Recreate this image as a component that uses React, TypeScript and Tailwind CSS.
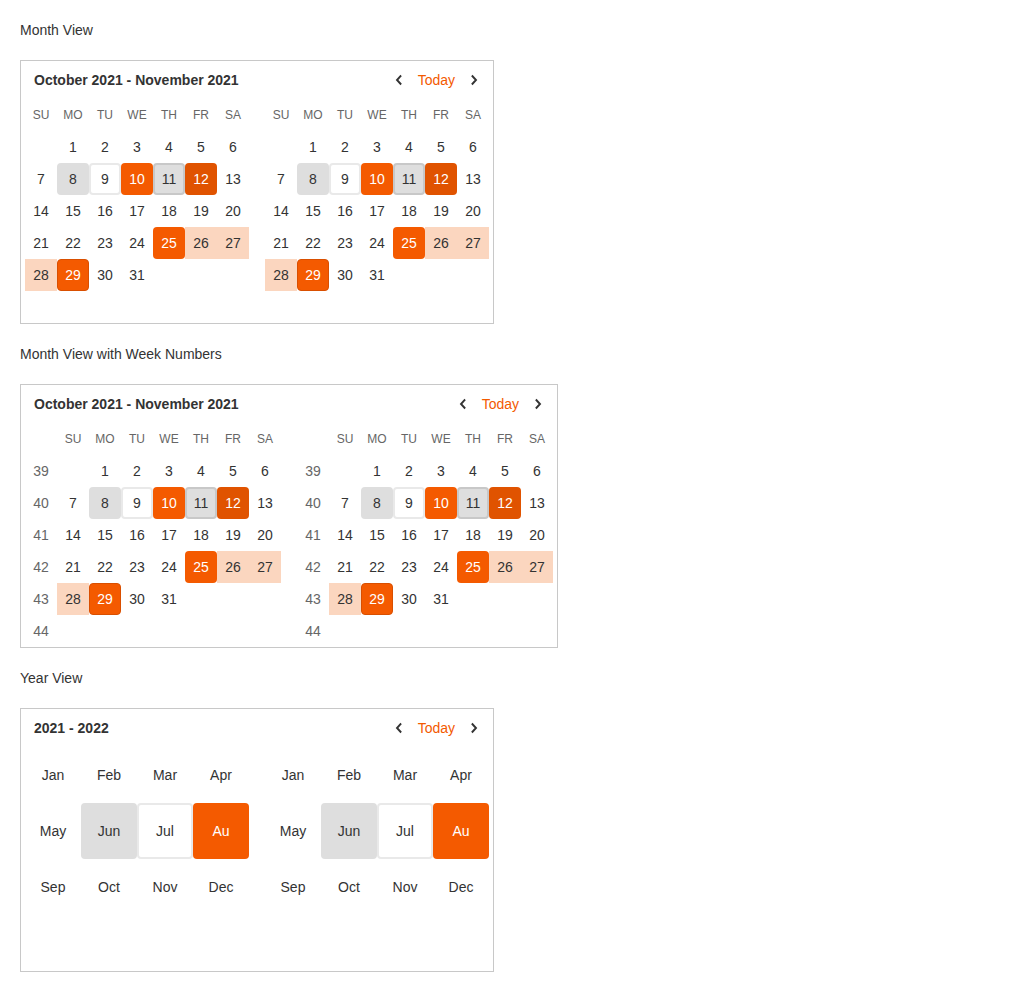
import React from 'react';

type CellState = 'none' | 'hover' | 'today' | 'selected' | 'focus' | 'active' | 'rangeStart' | 'range' | 'rangeEnd';

const DAYS = ['SU', 'MO', 'TU', 'WE', 'TH', 'FR', 'SA'];

// same grid is drawn for both months, as in the demo
const WEEKS: (number | null)[][] = [
  [null, 1, 2, 3, 4, 5, 6],
  [7, 8, 9, 10, 11, 12, 13],
  [14, 15, 16, 17, 18, 19, 20],
  [21, 22, 23, 24, 25, 26, 27],
  [28, 29, 30, 31, null, null, null],
  [null, null, null, null, null, null, null],
];

const WEEK_NUMBERS = [39, 40, 41, 42, 43, 44];

const DAY_STATE: Record<number, CellState> = {
  8: 'hover',
  9: 'today',
  10: 'selected',
  11: 'focus',
  12: 'active',
  25: 'rangeStart',
  26: 'range',
  27: 'range',
  28: 'range',
  29: 'rangeEnd',
};

const cellClass: Record<CellState, string> = {
  none: 'text-[#333]',
  hover: 'bg-[#dedede] rounded text-[#333]',
  today: 'border-2 border-[#e9e9e9] rounded text-[#333]',
  selected: 'bg-[#f45a00] rounded text-white',
  focus: 'bg-[#dedede] border-2 border-[#c8c8c8] rounded text-[#333]',
  active: 'bg-[#e05300] rounded text-white',
  rangeStart: 'bg-[#f45a00] rounded text-white',
  range: 'bg-[#fbd6bf] text-[#333]',
  rangeEnd: 'bg-[#f45a00] border border-[#d94f00] rounded text-white',
};

function Chevron({ dir }: { dir: 'left' | 'right' }) {
  return (
    <svg width="12" height="12" viewBox="0 0 12 12" fill="none">
      <path
        d={dir === 'left' ? 'M7.5 2.2L4 6l3.5 3.8' : 'M4.5 2.2L8 6 4.5 9.8'}
        stroke="#333"
        strokeWidth="1.9"
        strokeLinecap="square"
      />
    </svg>
  );
}

function Header({ title }: { title: string }) {
  return (
    <div className="flex items-center h-[38px] pl-[13px] pr-[7px]">
      <div className="flex-1 font-bold text-[14px] text-[#333]">{title}</div>
      <div className="flex items-center">
        <button className="w-6 h-6 flex items-center justify-center">
          <Chevron dir="left" />
        </button>
        <span className="mx-[7px] text-[14px] text-[#f35a00]">Today</span>
        <button className="w-6 h-6 flex items-center justify-center">
          <Chevron dir="right" />
        </button>
      </div>
    </div>
  );
}

function MonthGrid({ weekNumbers }: { weekNumbers?: boolean }) {
  return (
    <div className="flex flex-col">
      <div className="flex h-8 items-center text-[12px] text-[#666]">
        {weekNumbers && <div className="w-8" />}
        {DAYS.map((d) => (
          <div key={d} className="w-8 text-center">{d}</div>
        ))}
      </div>
      {WEEKS.map((week, wi) => (
        <div key={wi} className="flex h-8">
          {weekNumbers && (
            <div className="w-8 h-8 flex items-center justify-center text-[#666]">{WEEK_NUMBERS[wi]}</div>
          )}
          {week.map((day, di) => {
            const state: CellState = day ? DAY_STATE[day] ?? 'none' : 'none';
            return (
              <div key={di} className={`w-8 h-8 flex items-center justify-center ${cellClass[state]}`}>
                {day ?? ''}
              </div>
            );
          })}
        </div>
      ))}
    </div>
  );
}

const MONTHS = ['Jan', 'Feb', 'Mar', 'Apr', 'May', 'Jun', 'Jul', 'Au', 'Sep', 'Oct', 'Nov', 'Dec'];
const MONTH_STATE: Record<string, CellState> = { Jun: 'hover', Jul: 'today', Au: 'selected' };

function YearGrid() {
  return (
    <div className="grid grid-cols-[repeat(4,56px)] auto-rows-[56px]">
      {MONTHS.map((m) => (
        <div key={m} className={`flex items-center justify-center ${cellClass[MONTH_STATE[m] ?? 'none']}`}>
          {m}
        </div>
      ))}
      <div className="col-span-4" />
    </div>
  );
}

function Card({ title, children }: { title: string; children: React.ReactNode }) {
  return (
    <div className="self-start border border-[#c8c8c8]">
      <Header title={title} />
      <div className="flex gap-4 px-1">{children}</div>
    </div>
  );
}

export default function App() {
  return (
    <div className="flex flex-col gap-5 p-5 text-[14px] text-[#333] bg-white font-['Liberation_Sans',Arial,sans-serif]">
      <div className="leading-5">Month View</div>
      <Card title="October 2021 - November 2021">
        <MonthGrid />
        <MonthGrid />
      </Card>
      <div className="leading-5">Month View with Week Numbers</div>
      <Card title="October 2021 - November 2021">
        <MonthGrid weekNumbers />
        <MonthGrid weekNumbers />
      </Card>
      <div className="leading-5">Year View</div>
      <Card title="2021 - 2022">
        <YearGrid />
        <YearGrid />
      </Card>
    </div>
  );
}
